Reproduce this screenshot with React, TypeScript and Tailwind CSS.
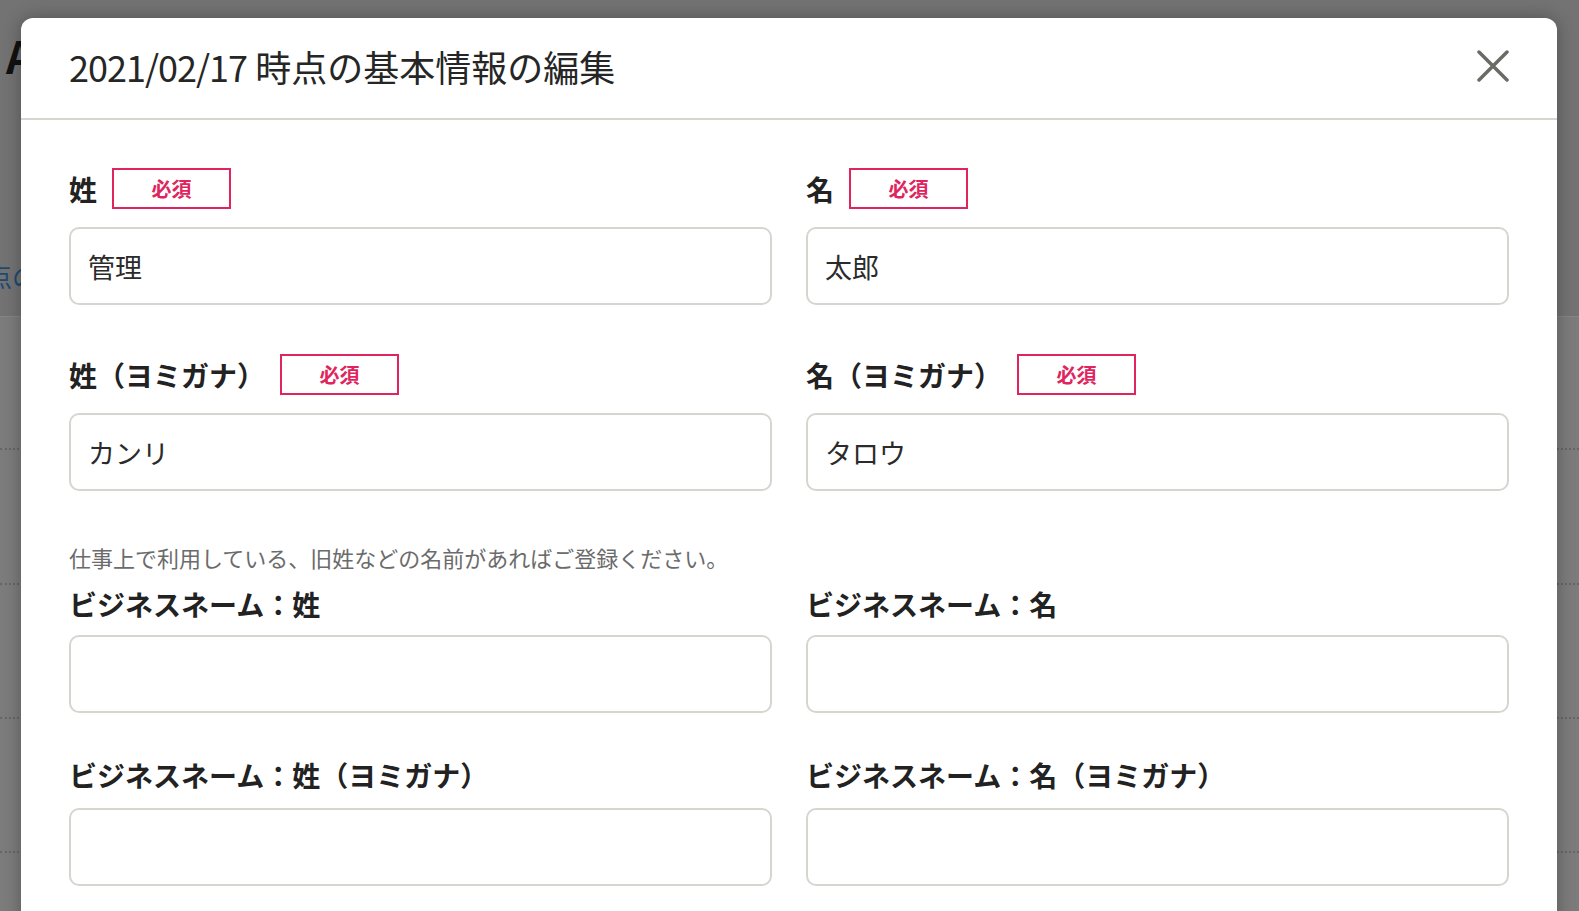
import { useState } from "react";

const fields = {
  top: [
    { label: "姓", value: "管理" },
    { label: "名", value: "太郎" },
  ],
  kana: [
    { label: "姓（ヨミガナ）", value: "カンリ" },
    { label: "名（ヨミガナ）", value: "タロウ" },
  ],
  business: [
    { label: "ビジネスネーム：姓", value: "" },
    { label: "ビジネスネーム：名", value: "" },
  ],
  businessKana: [
    { label: "ビジネスネーム：姓（ヨミガナ）", value: "" },
    { label: "ビジネスネーム：名（ヨミガナ）", value: "" },
  ],
};

function RequiredBadge() {
  return (
    <span className="ml-[15px] inline-flex h-[41px] w-[119px] items-center justify-center border-2 border-[#e0245e] text-[20px] font-bold text-[#e0245e]">
      必須
    </span>
  );
}

function TextField({ value }: { value: string }) {
  const [v, setV] = useState(value);
  return (
    <input
      value={v}
      onChange={(e) => setV(e.target.value)}
      className="block h-[78px] w-full rounded-[10px] border-2 border-[#d6d6d0] bg-white px-[17px] text-[27px] text-[#2b2b2b] outline-none"
    />
  );
}

function RequiredField({ label, value }: { label: string; value: string }) {
  return (
    <div>
      <div className="flex h-[41px] items-center">
        <span className="text-[28px] font-bold leading-[40px] text-[#222]">{label}</span>
        <RequiredBadge />
      </div>
      <div className="mt-[18px]">
        <TextField value={value} />
      </div>
    </div>
  );
}

function PlainField({ label, value, gap }: { label: string; value: string; gap: string }) {
  return (
    <div>
      <div className="text-[28px] font-bold leading-[40px] text-[#222]">{label}</div>
      <div className={gap}>
        <TextField value={value} />
      </div>
    </div>
  );
}

function BackgroundPage() {
  return (
    <div className="h-full w-full bg-[#7c7c7c]">
      <div className="h-[317px] border-b border-[#858585] bg-[#737373]">
        <div className="pl-[6px] pt-[30px] text-[44px] font-bold leading-[50px] text-[#111]">A</div>
        <div className="ml-[-14px] mt-[178px] text-[26px] leading-[36px] text-[#1f4a72]">点の</div>
      </div>
      <div className="h-[133px] border-b-2 border-dotted border-[#666]" />
      <div className="h-[135px] border-b-2 border-dotted border-[#666]" />
      <div className="h-[134px] border-b-2 border-dotted border-[#666]" />
      <div className="h-[134px] border-b-2 border-dotted border-[#666]" />
    </div>
  );
}

export default function App() {
  return (
    <div className="relative h-[911px] w-full overflow-hidden font-['Noto_Sans_CJK_JP','Noto_Sans',sans-serif]">
      <BackgroundPage />

      <div className="absolute left-[21px] top-[18px] w-[1536px] rounded-t-[12px] bg-white shadow-[0_0_18px_rgba(0,0,0,0.3)]">
        <div className="flex h-[102px] items-center justify-between border-b-2 border-[#d6d6d0] px-[48px] pb-[5px]">
          <h2 className="text-[36px] font-normal leading-[48px] text-[#262626]">
            <span className="tracking-[-1px]">2021/02/17</span> 時点の基本情報の編集
          </h2>
          <button className="flex h-[32px] w-[32px] items-center justify-center" aria-label="閉じる">
            <svg width="32" height="32" viewBox="0 0 32 32" fill="none">
              <path d="M2 2L30 30M30 2L2 30" stroke="#6b6b66" strokeWidth="3.5" strokeLinecap="round" />
            </svg>
          </button>
        </div>

        <div className="px-[48px] pb-[40px] pt-[48px]">
          <div className="grid grid-cols-2 gap-x-[34px]">
            {fields.top.map((f) => (
              <RequiredField key={f.label} label={f.label} value={f.value} />
            ))}
          </div>

          <div className="mt-[49px] grid grid-cols-2 gap-x-[34px]">
            {fields.kana.map((f) => (
              <RequiredField key={f.label} label={f.label} value={f.value} />
            ))}
          </div>

          <p className="mt-[50px] text-[22px] leading-[32px] text-[#6b6b6b]">
            仕事上で利用している、旧姓などの名前があればご登録ください。
          </p>

          <div className="mt-[11px] grid grid-cols-2 gap-x-[34px]">
            {fields.business.map((f) => (
              <PlainField key={f.label} label={f.label} value={f.value} gap="mt-[11px]" />
            ))}
          </div>

          <div className="mt-[42px] grid grid-cols-2 gap-x-[34px]">
            {fields.businessKana.map((f) => (
              <PlainField key={f.label} label={f.label} value={f.value} gap="mt-[13px]" />
            ))}
          </div>
        </div>
      </div>
    </div>
  );
}
